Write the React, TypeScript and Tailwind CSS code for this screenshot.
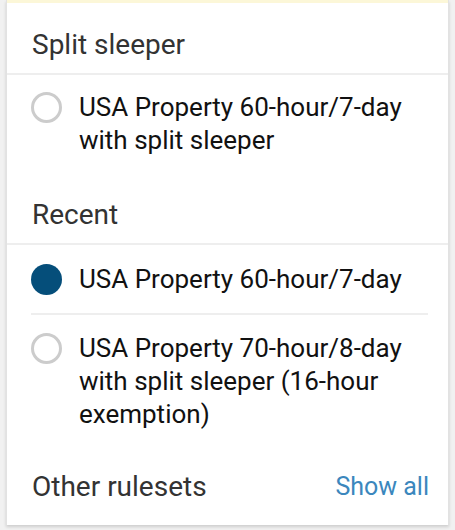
import React from 'react';

type Rule = { label: string; selected?: boolean };

const Radio: React.FC<{ selected?: boolean }> = ({ selected }) =>
    selected ? (
        <span className="mt-[1px] h-[31px] w-[31px] shrink-0 rounded-full bg-[#054e7a]" />
    ) : (
        <span className="mt-[1px] h-[31px] w-[31px] shrink-0 rounded-full border-[3px] border-[#cccccc] bg-white" />
    );

const RuleRow: React.FC<{ rule: Rule }> = ({ rule }) => (
    <div className="flex items-start gap-[17px]">
        <Radio selected={rule.selected} />
        <span className="text-[26px] leading-[33px] text-[#111111]">{rule.label}</span>
    </div>
);

const SectionTitle: React.FC<{ children: React.ReactNode }> = ({ children }) => (
    <h2 className="border-b-2 border-[#eeeeee] px-[25px] pb-[11px] text-[28px] leading-[34px] font-normal text-[#333333]">
        {children}
    </h2>
);

const App: React.FC = () => {
    return (
        <div className="h-[530px] w-[455px] overflow-hidden bg-[#f1f1f1] font-['Roboto',sans-serif]">
            <div className="mx-[6px] border-x border-[#e2e2e2] bg-white shadow-[0_2px_3px_rgba(0,0,0,0.15)]">
                <div className="h-[3px] bg-[#fcf7d8]" />

                {/* Split sleeper */}
                <div className="pt-[25px]">
                    <SectionTitle>Split sleeper</SectionTitle>
                    <div className="pl-[24px] pr-[20px] pt-[16px] pb-[41px]">
                        <RuleRow rule={{ label: 'USA Property 60-hour/7-day with split sleeper' }} />
                    </div>
                </div>

                {/* Recent */}
                <div>
                    <SectionTitle>Recent</SectionTitle>
                    <div className="pl-[24px] pr-[20px]">
                        <div className="border-b-2 border-[#eeeeee] pt-[18px] pb-[17px]">
                            <RuleRow rule={{ label: 'USA Property 60-hour/7-day', selected: true }} />
                        </div>
                        <div className="pt-[17px]">
                            <RuleRow rule={{ label: 'USA Property 70-hour/8-day with split sleeper (16-hour exemption)' }} />
                        </div>
                    </div>
                </div>

                {/* Other rulesets */}
                <div className="flex items-center justify-between pl-[25px] pr-[19px] pt-[39px] pb-[21px]">
                    <span className="text-[28px] leading-[34px] text-[#333333]">Other rulesets</span>
                    <button className="text-[25px] leading-[34px] text-[#3b87bd]">Show all</button>
                </div>
            </div>
        </div>
    );
};

export default App;
